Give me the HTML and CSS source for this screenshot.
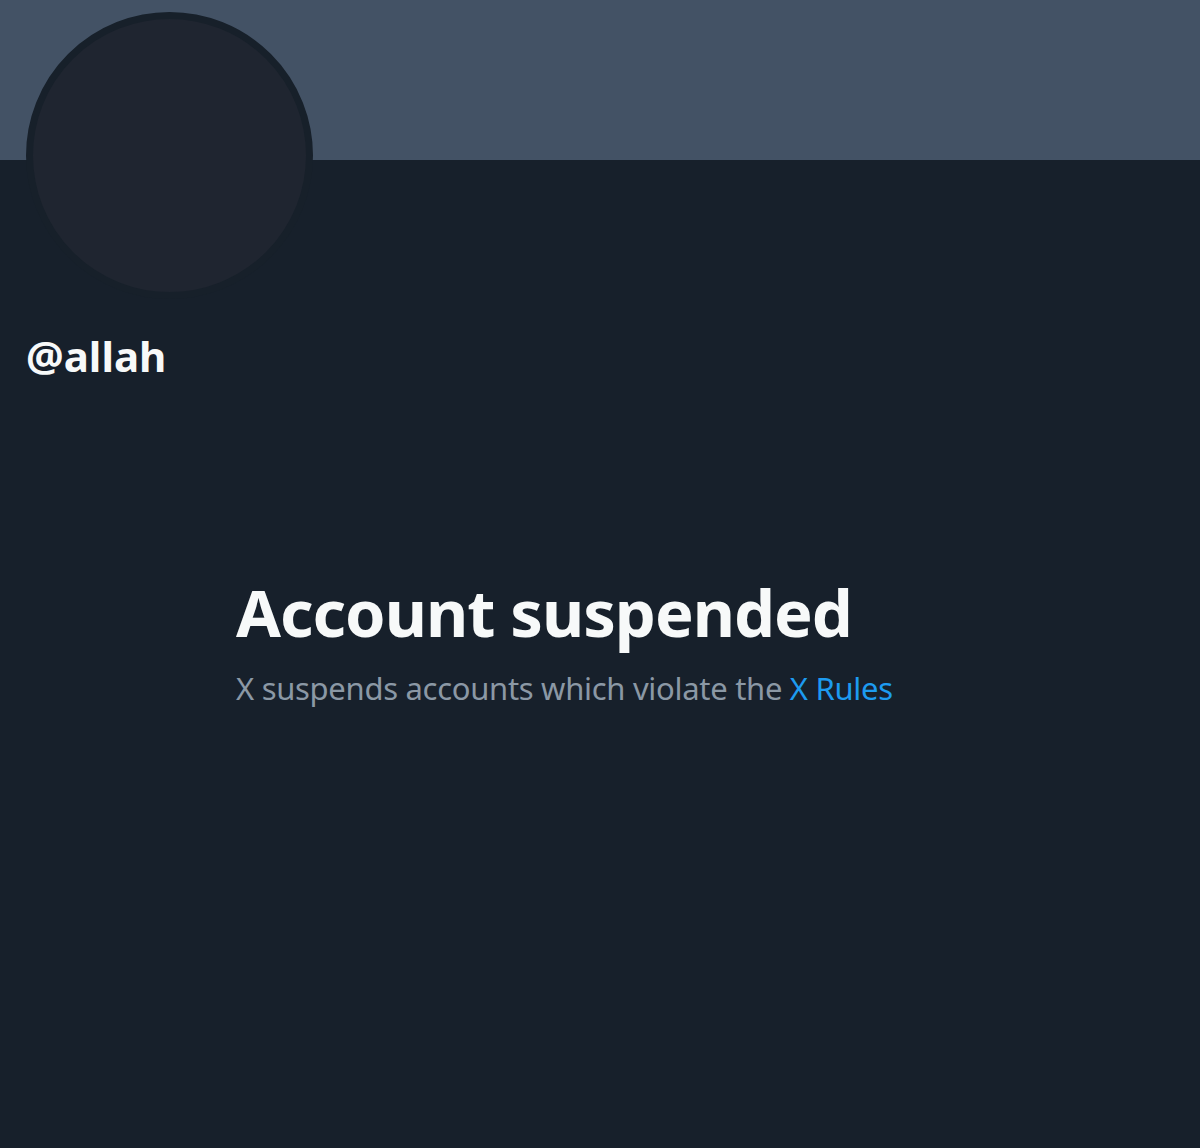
FILE: index.html
```html
<!DOCTYPE html>
<html>
<head>
<meta charset="utf-8">
<link rel="stylesheet" href="styles.css">
</head>
<body>
<div class="page">
  <div class="banner"></div>
  <div class="profile">
    <div class="avatar"></div>
    <div class="handle">@allah</div>
  </div>
  <div class="notice">
    <h1 class="title">Account suspended</h1>
    <p class="desc">X suspends accounts which violate the <a class="link" href="#">X Rules</a></p>
  </div>
</div>
</body>
</html>
```
FILE: styles.css
```css
html, body {
  margin: 0;
  padding: 0;
  background: #17202b;
}
.page {
  width: 1200px;
  height: 1148px;
  background: #17202b;
  font-family: "Noto Sans", "Open Sans", sans-serif;
  overflow: hidden;
}
.banner {
  height: 160px;
  background: #435265;
}
.profile {
  padding: 0 26px;
  margin-top: -148px;
  position: relative;
}
.avatar {
  width: 273px;
  height: 273px;
  border-radius: 50%;
  background: #1f2530;
  border: 7px solid #17202a;
}
.handle {
  margin-top: 29px;
  color: #f7f9f9;
  font-weight: 700;
  font-size: 42px;
  line-height: 56px;
}
.notice {
  padding-left: 236px;
  margin-top: 190px;
}
.title {
  margin: 0;
  color: #f7f9f9;
  font-weight: 700;
  font-size: 65px;
  line-height: 76px;
  letter-spacing: -1px;
}
.desc {
  margin: 18px 0 0;
  color: #8b98a5;
  font-size: 31px;
  line-height: 40px;
  letter-spacing: -0.3px;
}
.link {
  color: #1d9bf0;
  text-decoration: none;
}
```
